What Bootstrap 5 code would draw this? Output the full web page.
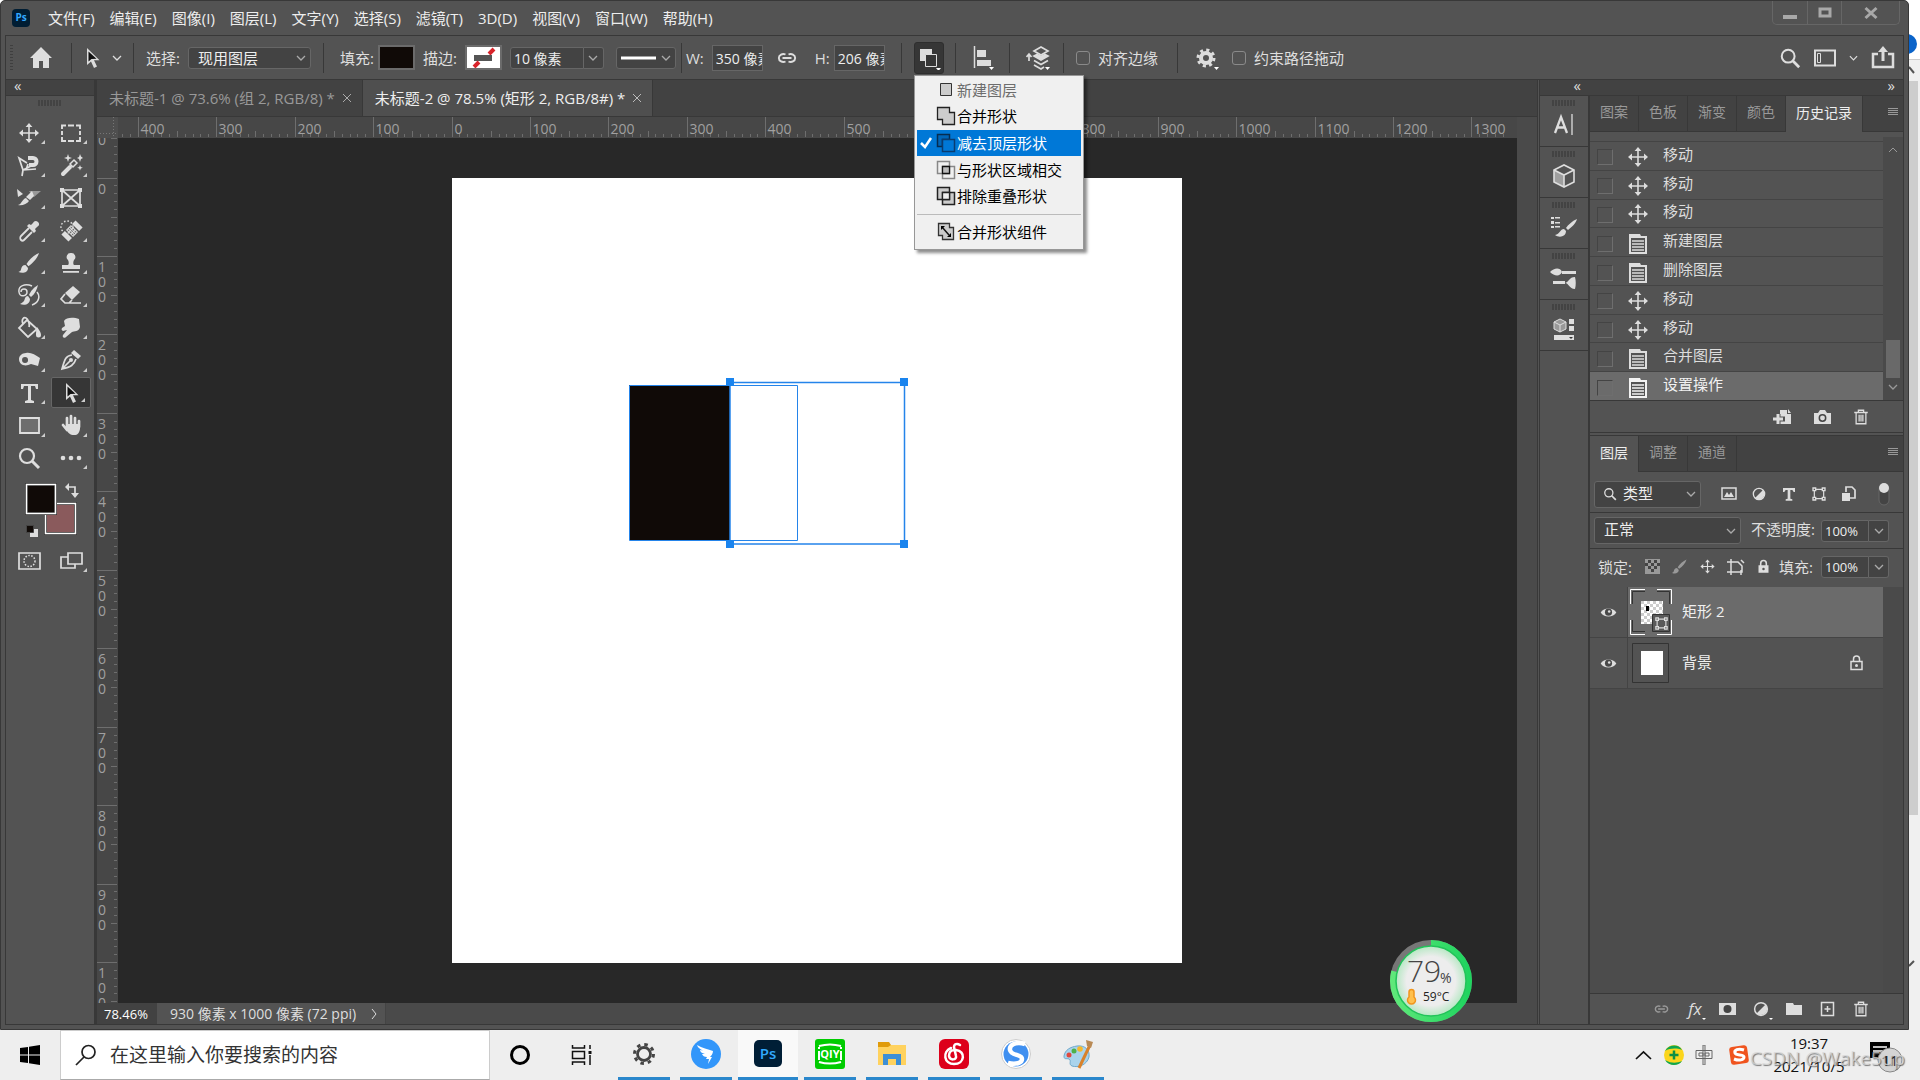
<!DOCTYPE html>
<html lang="zh-CN">
<head>
<meta charset="utf-8">
<meta name="viewport" content="width=device-width, initial-scale=1">
<title>Photoshop</title>
<link href="https://cdn.jsdelivr.net/npm/bootstrap@5.3.0/dist/css/bootstrap.min.css" rel="stylesheet">
<style>
:root{--face:#535353;--edge:#383838;--deep:#424242;--well:#434343;--ink:#dedede}
body{font-family:"Open Sans","Noto Sans CJK SC",sans-serif;font-size:15px;line-height:20px;color:var(--ink);background:#fff;height:100vh;overflow:hidden}
button,input,select{font:inherit;color:inherit}
button{background:none;border:0;padding:0}
a{color:inherit;text-decoration:none}
ul{list-style:none;margin:0;padding:0}
svg{display:block;flex:none}
svg:not([fill]){fill:currentColor}
.ic{width:24px;height:24px;fill:currentColor}
.ic-s{width:20px;height:20px}
.ln{fill:none;stroke:currentColor}
.min-0{min-width:0;min-height:0}

.app-win{background:var(--face);border:1px solid var(--edge);border-radius:5px 5px 0 0}
.menu-strip{height:34px;padding-left:11px}
.menu-links{gap:15px;padding-left:18px;color:#eee}
.ps-logo{width:18px;height:18px;border-radius:4px;background:#001d33;color:#31a8ff;font-size:10px;font-weight:700;line-height:17px;text-align:center}
.win-btns{border:1px solid #666;border-top:0;border-radius:0 0 5px 5px;height:24px;color:#a8a8a8;margin-right:8px}
.win-btns button{width:34px}
.win-btns button+button{border-left:1px solid #666}
.win-btns button:last-child{width:58px}
.frame-in{margin:0 4px 4px;border:1px solid var(--edge)}

.opt-bar{height:44px;border-bottom:1px solid var(--edge)}
.opt-home{width:65px}
.opt-seg{height:30px;padding-left:12px;border-left:1px solid var(--edge);display:flex;align-items:center;flex:none}
.w-62{width:62px}.w-190{width:190px}.w-358{width:358px}.w-220{width:220px}.w-54{width:54px}.w-114{width:114px}
.src-pick{width:123px}.stroke-in{width:74px}.dash-pick{width:60px}.dim-in{width:51px;font-size:14px}
.grip-v{width:3px;height:26px;background:repeating-linear-gradient(#3f3f3f 0 1px,transparent 1px 3px)}
.pick{appearance:none;border:1px solid #666;border-radius:3px;background:var(--well) url("data:image/svg+xml,%3Csvg xmlns='http://www.w3.org/2000/svg' viewBox='0 0 10 10'%3E%3Cpath d='M1 3l4 4 4-4' fill='none' stroke='%23aaa' stroke-width='1.3'/%3E%3C/svg%3E") no-repeat right 4px center/10px;color:#eee;padding:0 18px 0 9px;height:22px;line-height:18px}
.pick-tall{height:27px;padding-bottom:3px}
.well{border:1px solid #666;background:var(--well);color:#eee;padding:0 0 0 3px;height:26px;border-radius:0;min-width:0}
.well-s{height:22px;border-radius:3px 0 0 3px;font-size:14px}
.drop-b{width:20px;border:1px solid #666;border-left:0;border-radius:0 3px 3px 0;background:var(--well);color:#aaa;display:flex;align-items:center;justify-content:center}
.paint{width:37px;height:25px;border:2px solid #6b6b6b;background:#100a07}
.paint.none{background:#fff}
.tick{appearance:none;width:14px;height:14px;border:1px solid #8a8a8a;border-radius:3px;margin:0}
.combine-btn{width:30px;height:32px;background:#363636;border:1px solid #2e2e2e;border-radius:3px;display:flex;justify-content:center;align-items:center}
.opt-right{gap:13px;padding-right:8px}

.pop-menu{position:absolute;left:0;top:33px;z-index:20;width:170px;background:#f0f0f0;border:1px solid #979797;box-shadow:3px 3px 3px rgba(0,0,0,.45);color:#000;padding:1px 2px 3px}
.pop-list{height:133px}
.pop-menu button{display:flex;align-items:center;width:100%;flex:1;text-align:left;padding-left:19px;gap:1px;color:#000}
.pop-menu .on{background:#0078d7;color:#fff;padding-left:2px}
.pop-menu .off{color:#6d6d6d}
.pop-end{border-top:1px solid #bbb;margin-top:4px;padding-top:3px;height:32px}

.col-head{height:16px;background:var(--deep);border-bottom:1px solid var(--edge);font-size:15px;line-height:11px}
.col-head-l{width:41px}
.tool-col{width:89px;border-right:1px solid var(--edge)}
.grip-h{width:24px;height:6px;background:repeating-linear-gradient(90deg,#434343 0 2px,transparent 2px 3px)}
.tool-grid{display:grid;grid-template-columns:42px 42px;grid-template-rows:repeat(11,1fr);height:357px;margin:11px 0 0 2px}
.tool-grid button,.tool-pair button{position:relative;display:flex;align-items:center;justify-content:center}
.more::after{content:"";position:absolute;right:5px;bottom:5px;border:2px solid transparent;border-right-color:#ccc;border-bottom-color:#ccc}
.tool-grid .sel{background:#363636;border:1px solid #666;border-radius:2px;height:31px;width:40px;margin:auto}
.swatches{width:56px;height:56px;margin:9px 0 0 19px}
.tool-pair{display:grid;grid-template-columns:42px 42px;height:32px;margin:6px 0 0 2px}

.doc-col{border-left:2px solid var(--edge);border-right:1px solid var(--edge)}
.doc-tabs{height:37px;background:var(--deep);border-bottom:1px solid var(--edge)}
.doc-tab{padding:0 10px 0 12px;gap:7px;color:#999;border-right:1px solid var(--edge)}
.doc-tab.now{background:#4f4f4f;color:#eee}
.rule-h{height:21px;background:#474747}
.rule-v{width:21px;background:#474747}
.rule-c{width:21px;background:#4f4f4f}
.ruler text{font:14px "Open Sans",sans-serif;fill:#a0a0a0}
.ruler path{stroke:#6e6e6e;fill:none;shape-rendering:crispEdges}
.stage{background:#282828;overflow:hidden;padding:40px 0 0 334px}
.gut{width:20px;background:#4a4a4a}
.stat{height:21px;background:#4a4a4a;line-height:20px}
.zoom-in{width:60px;background:var(--deep);border:0;color:#fff;font-size:13px;padding:0 0 0 7px}
.doc-info{background:var(--face);width:229px;padding-left:13px;border-right:1px solid #444;font-size:14px;white-space:nowrap}

.side{width:364px;border-left:1px solid var(--edge);margin-left:1px}
.dock{width:50px;border-right:2px solid var(--edge)}
.dock button{height:51px;border-bottom:1px solid var(--edge);display:flex;flex-direction:column;align-items:center;width:100%;padding-top:4px;gap:7px}
.pan-tabs{height:36px;background:var(--deep);border-bottom:1px solid var(--edge)}
.pan-tabs button{padding:0 10px 3px;font-size:14px;color:#999;border-right:1px solid var(--edge)}
.pan-tabs .now{background:var(--face);color:#eee;margin-bottom:-1px}
.hist-box{height:264px;margin-top:5px;border-bottom:1px solid var(--edge)}
.hist li{flex:1;border-top:1px solid #444;display:flex;align-items:center;padding-left:7px;color:#ddd}
.hist li label{padding:0 0 4px 13px}
.hist li .ic{margin:2px 0 0 13px}
.hist .pad-top{flex:0 0 4px;border:0}
.hist .now{background:#6b6b6b;color:#f2f2f2}
.step{appearance:none;width:16px;height:16px;border:1px solid #444;border-right-color:#6e6e6e;border-bottom-color:#6e6e6e;margin:3px 0 0}
.sbar{width:20px;background:#4a4a4a;color:#999}
.sthumb{height:38px;width:14px;background:#696969}
.foot-ic{height:31px;padding-right:33px;gap:16px}
.foot-h{gap:21px}
.foot-l{border-top:1px solid var(--edge)}
.fx-btn{width:16px;font-size:17px;line-height:18px}
.dot-d{position:relative}
.dot-d::after{content:"";position:absolute;right:-3px;bottom:-4px;border:2px solid transparent;border-top-color:#fff}
.split{height:4px;border-top:1px solid var(--edge);border-bottom:1px solid var(--edge)}
.row-line{border-bottom:1px solid var(--edge)}
.f-row{height:41px;padding:4px 0 0 4px}
.f-pick{width:107px;padding-left:28px}
.f-glass{margin-left:9px}
.f-icons{gap:14px;margin-left:20px}
.f-switch{margin-right:13px}
.b-row{height:36px;padding-left:4px}
.b-pick{width:147px}
.op-lab{width:80px;padding:0 0 4px 10px}
.pct{width:48px;font-size:13px}
.l-row{height:38px;padding:0 0 3px 8px}
.lock-lab{width:47px}
.lock-ic{width:134px;gap:11px}
.fill-lab{width:42px}
.muted-ic{color:#999}
.lay{display:flex;height:51px;border-bottom:1px solid #444;background:var(--face)}
.lay .eye{width:38px;border-right:1px solid #444;display:flex;align-items:center;justify-content:center}
.lay .body-l{flex:1;display:flex;align-items:center;gap:10px;padding-left:2px;color:#f0f0f0}
.lay.now .body-l{background:#6b6b6b}
.lay span{padding-bottom:2px}
.lay-lock{margin-right:20px}
.empty-l{background:#4c4c4c}

.gauge{position:absolute;left:1389px;bottom:57px;z-index:15}
.desk{width:11px;background:#f0f0f0}
.desk-a{height:60px;background:#fff;border-bottom:1px solid #ccc}
.desk-t{height:734px;margin-right:2px;background:#cdcdcd}
.desk-b{height:152px;margin-bottom:0}

.task{height:50px;background:#eee;color:#222}
.task .start{width:60px;display:flex;align-items:center;justify-content:center;color:#000}
.find{width:430px;background:#fff;border:1px solid #ccc;border-bottom-color:#aaa;padding-left:14px}
.find input{border:0;outline:0;font-size:19px;background:none;color:#333;width:340px;padding:0 0 0 13px}
.find input::placeholder{color:#333;opacity:1}
.apps{gap:2px}
.apps button{width:60px;display:flex;align-items:center;justify-content:center;height:50px}
.apps .run{border-bottom:3px solid #2a87cc;width:52px;margin:0 4px}
.apps .run.now{width:60px;margin:0;background:#f9f9f9}
.tray{padding-right:15px}
.ime{margin:0 16px 0 3px}
.clock{width:92px;margin:0 14px;text-align:center;line-height:23px;color:#111}
.wm{position:absolute;right:15px;bottom:8px;font-size:19px;line-height:28px;color:rgba(215,215,215,.75);text-shadow:1px 1px 1px rgba(90,90,90,.8);pointer-events:none;z-index:5}
</style>
<script src="https://cdn.jsdelivr.net/npm/bootstrap@5.3.0/dist/js/bootstrap.bundle.min.js"></script>
</head>
<body class="d-flex flex-column">

<svg width="0" height="0" class="position-absolute" aria-hidden="true">
<pattern id="checks" width="6" height="6" patternUnits="userSpaceOnUse" x="11" y="12"><path d="M0 0h6v6H0z" fill="#fff"/><path d="M0 0h3v3H0zM3 3h3v3H3z" fill="#ccc"/></pattern>
<symbol id="move" viewBox="0 0 24 24"><path d="M12 2l3.4 4h-2.6v5.2H18V8.6l4 3.4-4 3.4v-2.6h-5.2V18h2.6L12 22l-3.4-4h2.6v-5.2H6v2.6L2 12l4-3.4v2.6h5.2V6H8.6z"/></symbol>
<symbol id="doc" viewBox="0 0 24 24"><path d="M3 3h11l1 2h6v18H3z"/><path d="M5 7h14v14H5z" fill="#535353"/><path d="M6 10h12M6 13h12M6 16h12M6 19h12" stroke="currentColor" stroke-width="1.6"/></symbol>
<symbol id="chev" viewBox="0 0 10 10"><path class="ln" d="M1 3l4 4 4-4" stroke-width="1.3"/></symbol>
<symbol id="trash" viewBox="0 0 24 24"><path class="ln" stroke-width="1.7" d="M3 6h18M8.500 6V3h7v3M5.500 6v15h13V6M9.500 9v9M12 9v9M14.500 9v9"/></symbol>
<symbol id="brush" viewBox="0 0 24 24"><path d="M22 2c-5 2-10 7-12.500 11l2 2.300C16 12 20.500 7 22 2zM8.500 14c-3 0-4 2-4.500 4.500-.3 1.500-1.500 2-2.500 2.500 3.500 1.500 9.500 1 9.500-4z"/></symbol>
<symbol id="link" viewBox="0 0 24 24"><path class="ln" stroke-width="1.900" d="M10.500 8.500A4.500 4 0 1 0 10.500 15.500M13.500 8.500A4.500 4 0 1 1 13.500 15.500M7.500 12h9"/></symbol>
<symbol id="half" viewBox="0 0 24 24"><circle class="ln" cx="12" cy="12" r="8.500" stroke-width="2"/><path d="M18 6A8.500 8.500 0 0 1 6 18z"/></symbol>
<symbol id="frame" viewBox="0 0 24 24"><path class="ln" stroke-width="1.800" d="M5 5h14v14H5z"/><path d="M2 2h6v6H2zM16 2h6v6h-6zM2 16h6v6H2zM16 16h6v6h-6z"/><path d="M4 4h2v2H4zM18 4h2v2h-2zM4 18h2v2H4zM18 18h2v2h-2z" fill="#535353"/></symbol>
<symbol id="search" viewBox="0 0 24 24"><circle class="ln" cx="10" cy="10" r="7" stroke-width="2.200"/><path class="ln" d="M15 15l7 7" stroke-width="3"/></symbol>
<symbol id="cursor" viewBox="0 0 24 24"><path d="M7 2v17l4-3.600L14 22l3-1.500-3-6.300h5.500z" fill="#ddd"/><path d="M8.500 5.500v10L11.500 13l5-.3z" fill="#111"/></symbol>
<symbol id="eye" viewBox="0 0 24 24"><path d="M1 12C5 4.500 19 4.500 23 12 19 19.500 5 19.500 1 12z"/><circle cx="12" cy="11.500" r="5" fill="#484848"/><circle cx="13" cy="10.500" r="1.800"/></symbol>
<symbol id="burger" viewBox="0 0 12 12"><path stroke="currentColor" d="M1 2.500h10M1 4.500h10M1 6.500h10M1 8.500h10"/></symbol>
<symbol id="lockf" viewBox="0 0 24 24"><path d="M4 10h16v12H4z"/><path class="ln" stroke-width="2.500" d="M7.500 11V7a4.500 4.500 0 0 1 9 0v4"/><circle cx="12" cy="16" r="2" fill="#535353"/></symbol>
</svg>

<div class="d-flex flex-fill min-0">
<main class="app-win flex-fill d-flex flex-column min-0">

  <header class="menu-strip d-flex">
    <div class="d-flex align-items-center flex-fill">
      <div class="ps-logo">Ps</div>
      <nav class="menu-links d-flex">
        <a href="#">文件(F)</a><a href="#">编辑(E)</a><a href="#">图像(I)</a><a href="#">图层(L)</a><a href="#">文字(Y)</a><a href="#">选择(S)</a><a href="#">滤镜(T)</a><a href="#">3D(D)</a><a href="#">视图(V)</a><a href="#">窗口(W)</a><a href="#">帮助(H)</a>
      </nav>
    </div>
    <div class="win-btns d-flex">
      <button aria-label="最小化"><svg class="mx-auto" width="14" height="14"><path d="M0 9h14v4H0z" fill="#a8a8a8"/></svg></button>
      <button aria-label="最大化"><svg class="mx-auto" width="14" height="14"><path d="M2 3h10v7H2z" fill="none" stroke="#a8a8a8" stroke-width="3"/></svg></button>
      <button aria-label="关闭"><svg class="mx-auto" width="14" height="14"><path d="M1.500 2l11 10M12.500 2l-11 10" stroke="#a8a8a8" stroke-width="3"/></svg></button>
    </div>
  </header>

  <div class="frame-in flex-fill d-flex flex-column min-0">
    <div class="opt-bar d-flex align-items-center">
      <div class="opt-home d-flex align-items-center ps-1"><span class="grip-v"></span>
        <button class="ms-3" aria-label="主页"><svg class="ic" viewBox="0 0 24 24"><path d="M12 1L1 12h3v10h6v-7h4v7h6V12h3z"/></svg></button></div>
      <div class="opt-seg w-62 ps-2"><button aria-label="路径选择"><svg class="ic" width="24"><use href="#cursor"/></svg></button><svg class="ms-2" width="10" height="10"><use href="#chev"/></svg></div>
      <div class="opt-seg w-190"><label for="selSrc" class="me-2">选择:</label><select id="selSrc" class="pick src-pick"><option>现用图层</option></select></div>
      <div class="opt-seg w-358 gap-1 ps-3"><span>填充:</span><button class="paint me-1" aria-label="填充颜色"></button><label for="strokeW" class="me-1">描边:</label><button class="paint none" aria-label="描边颜色"><svg width="33" height="21"><path d="M7 20l5-5M22 7l5-5" stroke="#d8232a" stroke-width="4"/><path d="M7 8h18v6H7z" fill="#555"/></svg></button>
        <span class="d-flex ms-1"><input id="strokeW" class="well well-s stroke-in" value="10 像素"><button class="drop-b" aria-label="宽度"><svg width="10" height="10"><use href="#chev"/></svg></button></span>
        <button class="pick dash-pick ms-2 p-1" aria-label="描边类型"><svg width="35" height="12"><path d="M0 6h35" stroke="#fff" stroke-width="3"/></svg></button></div>
      <div class="opt-seg w-220 ps-1"><label for="fw" class="me-2">W:</label><input id="fw" class="well dim-in" value="350 像素"><button class="ms-2 me-3 ps-1" aria-label="链接宽高"><svg class="ic" width="24"><use href="#link"/></svg></button><label for="fh" class="me-1">H:</label><input id="fh" class="well dim-in" value="206 像素"></div>
      <div class="opt-seg w-54">
        <div class="position-relative"><button class="combine-btn" aria-label="路径操作"><svg width="24" height="24"><path d="M3 3h12v12H3z" fill="#ddd"/><path d="M8.500 8.500h11v12h-11z" fill="#363636" stroke="#ddd"/><path d="M19 22h5l-2.500 3z" fill="#fff"/></svg></button>
        <div class="pop-menu">
          <div class="pop-list d-flex flex-column">
            <button class="off"><svg class="ic-s" viewBox="0 0 20 20"><path d="M4.500 3.500h11v12h-11z" fill="#ccc" stroke="#333"/></svg>新建图层</button>
            <button><svg class="ic-s" viewBox="0 0 20 20"><path d="M1.500 1.500h12v5h5v12h-12v-5h-5z" fill="#ccc" stroke="#222" stroke-width="1.300"/></svg>合并形状</button>
            <button class="on"><svg width="16" height="16"><path d="M2 8l4 4 6-9" fill="none" stroke="#fff" stroke-width="2.500"/></svg><svg class="ic-s" viewBox="0 0 20 20"><path d="M1.500 1.500h12v5h-7v7h-5z" fill="#0065b8" stroke="#062c50" stroke-width="1.500"/><path d="M6.500 6.500h12v12h-12z" fill="#0078d7" stroke="#0a3c70" stroke-width="1.500"/></svg>减去顶层形状</button>
            <button><svg class="ic-s" viewBox="0 0 20 20"><path d="M1.500 1.500h12v12h-12zM6.500 6.500h12v12h-12z" fill="none" stroke="#888" stroke-width="1.500"/><path d="M6.500 6.500h7v7h-7z" fill="#bbb" stroke="#111" stroke-width="1.300"/></svg>与形状区域相交</button>
            <button><svg class="ic-s" viewBox="0 0 20 20"><path d="M1.500 1.500h12v12h-12zM6.500 6.500h12v12h-12z" fill="#ccc" stroke="#222" stroke-width="1.500"/><path d="M6.500 6.500h7v7h-7z" fill="#eee" stroke="#222" stroke-width="1.300"/></svg>排除重叠形状</button>
          </div>
          <div class="pop-end d-flex"><button><svg class="ic-s" viewBox="0 0 20 20"><path d="M2.500 1.500h11v4h4v12h-11v-4h-4z" fill="#ccc" stroke="#333" stroke-width="1.300"/><path d="M6 5l7 8" stroke="#111" stroke-width="1.500"/><path d="M5 4h4l-4 4zM15 15h-4l4-4z"/></svg>合并形状组件</button></div>
        </div></div>
      </div>
      <div class="opt-seg w-54 ps-3"><button aria-label="对齐"><svg width="24" height="26"><path d="M2.500 1v22" stroke="#ddd" stroke-width="1.500"/><path d="M5 5h9v7H5zM5 15h14v6H5z" fill="#ddd"/><path d="M17 22h5l-2.500 3z" fill="#fff"/></svg></button></div>
      <div class="opt-seg w-54 ps-3"><button aria-label="排列"><svg width="28" height="26" fill="none" stroke="#ddd" stroke-width="1.700"><path d="M3 16V9M.5 12L3 9l2.500 3M15 2l7 4-7 4-7-4z"/><path d="M8 11l7 4 7-4-3-1.500-4 2-4-2z" fill="#ddd"/><path d="M8 15.500l7 4 7-4M8 20l7 4 3-2"/><path d="M19 22h5l-2.500 3z" fill="#fff" stroke="none"/></svg></button></div>
      <div class="opt-seg w-114 gap-2"><input class="tick" type="checkbox" id="ck1"><label for="ck1">对齐边缘</label></div>
      <div class="opt-seg flex-fill ps-3"><button aria-label="设置"><svg width="26" height="24"><circle cx="12" cy="12" r="5" fill="none" stroke="#ddd" stroke-width="4"/><circle cx="12" cy="12" r="8" fill="none" stroke="#ddd" stroke-width="3" stroke-dasharray="3.100 3.180"/><path d="M20 21h5l-2.500 3z" fill="#fff"/></svg></button><span class="d-flex align-items-center gap-2 ms-2 ps-1"><input class="tick" type="checkbox" id="ck2"><label for="ck2">约束路径拖动</label></span></div>
      <div class="opt-right d-flex align-items-center"><button aria-label="搜索"><svg width="22" height="22"><use href="#search"/></svg></button><button aria-label="工作区"><svg width="22" height="18"><path d="M1 1.500h20v15H1z" fill="none" stroke="#ddd" stroke-width="2"/><path d="M3.500 4.500h3v9h-3z" fill="none" stroke="#ddd"/></svg></button><svg width="9" height="10"><use href="#chev"/></svg><button aria-label="共享"><svg width="24" height="24"><path d="M7 8H2v13h20V8h-5" fill="none" stroke="#ddd" stroke-width="2.500"/><path d="M12 15V5" stroke="#ddd" stroke-width="3"/><path d="M7 6l5-6 5 6z" fill="#ddd"/></svg></button></div>
    </div>

    <div class="d-flex flex-fill min-0">
      <aside class="tool-col flex-shrink-0">
        <div class="col-head ps-2">«</div>
        <div class="grip-h mx-auto mt-1"></div>
        <div class="tool-grid">
          <button class="more" aria-label="移动"><svg class="ic"><use href="#move"/></svg></button>
          <button class="more" aria-label="选框"><svg class="ic" viewBox="0 0 24 24"><path class="ln" d="M3 8V4.500h4M9 4.500h6M17 4.500h4V8M21 10v4M21 16v4h-4M15 20H9M7 20H3v-4M3 14v-4" stroke-width="1.900"/></svg></button>
          <button class="more" aria-label="套索"><svg class="ic" viewBox="0 0 24 24"><path class="ln" stroke-width="1.700" d="M10 9L2 4l4 12M6 16l8-4M6 16l13-1M6 16l-1 6M11 10l-2 6"/><path class="ln" stroke-width="4" d="M11 4h5a3.500 3.500 0 0 1 0 7h-4"/></svg></button>
          <button class="more" aria-label="魔棒"><svg class="ic" viewBox="0 0 24 24"><path class="ln" stroke-width="4" stroke-linecap="round" d="M4 20l7-7"/><path class="ln" stroke-width="1.500" d="M11 10l4-4 3 3-4 4z"/><path d="M9 0l1 3 3 1-3 1-1 3-1-3-3-1 3-1zM21 0l1 2.500L24 4l-2 1-1 3-1-3-2-1 2-1zM21 11l.8 2 2 .8-2 .8-.8 2-.8-2-2-.8 2-.8z"/></svg></button>
          <button class="more" aria-label="切片"><svg class="ic" viewBox="0 0 24 24"><path d="M0 3l6 5-5 3z"/><path d="M12 5h12l-7 6z" opacity=".5"/><path d="M15 5l2 5-4 4-4-3zM9 12l3 3c-2 3-7 5-11 4 4-1 4-6 8-7z"/></svg></button>
          <button aria-label="图框"><svg class="ic" viewBox="0 0 24 24"><path class="ln" stroke-width="1.700" d="M3 4h18v16H3zM3 4l18 16M21 4L3 20"/><path d="M1 2h4v4H1zM19 2h4v4h-4zM1 18h4v4H1zM19 18h4v4h-4z"/></svg></button>
          <button class="more" aria-label="吸管"><svg class="ic" viewBox="0 0 24 24"><path d="M21 3c-2-2-4-1-5 1l-2 2-2-1-2 2 7 7 2-2-1-2 2-2c2-1 3-3 1-5z"/><path class="ln" stroke-width="1.800" d="M12 9l-8 8c-1 1-1 3 0 4s2 1 3 0l8-8"/></svg></button>
          <button class="more" aria-label="修复画笔"><svg class="ic" viewBox="0 0 24 24"><circle class="ln" cx="8" cy="8" r="6" stroke-width="1.500" stroke-dasharray="1.500 2"/><g transform="rotate(-45 13 12)"><path d="M3 7h5v10H3zM9.500 7h7v10h-7zM18 7h5v10h-5z"/><path d="M11 8v8M13 8v8M15 8v8" stroke="#666" stroke-dasharray="2 1"/></g></svg></button>
          <button class="more" aria-label="画笔"><svg class="ic"><use href="#brush"/></svg></button>
          <button class="more" aria-label="图章"><svg class="ic" viewBox="0 0 24 24"><path d="M12 2a4 4 0 0 1 3 7c-1 2-1 4 0 5h6v4H3v-4h6c1-1 1-3 0-5a4 4 0 0 1 3-7zM4 20h16v1.800H4z"/></svg></button>
          <button class="more" aria-label="历史画笔"><svg class="ic" viewBox="0 0 24 24"><path d="M21 2c-5 3-7 6-9 10l2 2c4-3 6-8 7-12zM11 13c-3 0-3 3-4 5-1 1-2 2-4 3 5 2 10 0 10-5z"/><path class="ln" stroke-width="1.500" d="M15 3C8 0 1 3 2 9s8 4 8 0-6-4-6 0M20 9c4 5 1 11-5 13"/></svg></button>
          <button class="more" aria-label="橡皮"><svg class="ic" viewBox="0 0 24 24"><path d="M14 3l7 6-8 8-7-7z"/><path class="ln" stroke-width="1.700" d="M6 11l-4 5 4 4h4l3-3M10 20h12"/></svg></button>
          <button class="more" aria-label="油漆桶"><svg class="ic" viewBox="0 0 24 24"><path class="ln" stroke-width="1.800" d="M10 4l10 9-9 8-9-9zM6 8C4 3 7 1 9 2s4 6 3 9"/><path d="M20 11c3 4 4 6 4 8a2.500 2.500 0 0 1-5 0c0-2 0-5 1-8z"/></svg></button>
          <button class="more" aria-label="涂抹"><svg class="ic" viewBox="0 0 24 24"><path d="M5 5c2-4 10-4 15-2l1 8c-1 5-6 4-8 5l-6 5c-2 2-4 0-3-2l4-5-4 1c-1-1-2-1-1-3l3-2z"/></svg></button>
          <button class="more" aria-label="减淡"><svg class="ic" viewBox="0 0 24 24"><path fill-rule="evenodd" d="M9 5c5-1 9 2 14 5l-2 8-7-2c-6 3-12 1-12-5 0-3 3-6 7-6zM8 9a3 3 0 1 0 .1 6 3 3 0 0 0-.1-6z"/></svg></button>
          <button class="more" aria-label="钢笔"><svg class="ic" viewBox="0 0 24 24"><path d="M15 2l7 6-3 3-7-6z"/><path class="ln" stroke-width="1.700" d="M13 7c-6 1-7 3-10 14 9-2 12-4 14-10M3 21l8-8"/><circle cx="12" cy="12" r="2"/></svg></button>
          <button class="more" aria-label="文字"><svg class="ic" viewBox="0 0 24 24"><path d="M4 3h17v5h-2l-1-3h-4v14l3 1v2H8v-2l3-1V5H7L6 8H4z"/></svg></button>
          <button class="more sel" aria-label="路径选择工具"><svg class="ic"><use href="#cursor"/></svg></button>
          <button class="more" aria-label="矩形"><svg class="ic" viewBox="0 0 24 24"><path d="M3 5h19v15H3z" fill="#6e6e6e" stroke="currentColor" stroke-width="1.800"/></svg></button>
          <button class="more" aria-label="抓手"><svg class="ic" viewBox="0 0 24 24"><path class="ln" stroke-width="2.700" stroke-linecap="round" d="M8 13V5M12 12V3M16 12V5M20 14V8M8 17l-4-5"/><path d="M7 11h14v5c-1 4-2 6-6 6s-6-2-8-6z"/></svg></button>
          <button aria-label="缩放"><svg class="ic"><use href="#search"/></svg></button>
          <button class="more" aria-label="更多"><svg class="ic" viewBox="0 0 24 24"><circle cx="4" cy="12" r="2.300"/><circle cx="12" cy="12" r="2.300"/><circle cx="20" cy="12" r="2.300"/></svg></button>
        </div>
        <svg class="swatches" viewBox="0 0 56 56"><path d="M20.500 20.500h30v30h-30z" fill="#8a5a5c" stroke="#333" stroke-width="3"/><path d="M20.500 20.500h30v30h-30z" fill="none" stroke="#fff" stroke-width="1.500"/><path d="M1.500 1.500h29v29h-29z" fill="#100a07" stroke="#333" stroke-width="3"/><path d="M1.500 1.500h29v29h-29z" fill="none" stroke="#fff" stroke-width="1.500"/><path d="M43 4h7v8" fill="none" stroke="#ddd" stroke-width="1.700"/><path d="M44 0v8l-4-4zM46 10h8l-4 5z" fill="#ddd"/><path d="M5 46h8v8H5z" fill="#ddd"/><path d="M1.500 42.500h7v7h-7z" fill="#100a07" stroke="#444"/></svg>
        <div class="tool-pair"><button aria-label="快速蒙版"><svg class="ic" viewBox="0 0 24 24"><path class="ln" stroke-width="1.700" d="M2 4h21v16H2z"/><circle class="ln" cx="12.500" cy="12" r="5.500" stroke-width="1.500" stroke-dasharray="1.500 1.500"/></svg></button><button class="more" aria-label="屏幕模式"><svg class="ic" viewBox="0 0 24 24"><path class="ln" stroke-width="1.700" d="M2 8h14v11H2z"/><path d="M9 4h14v11H9z" fill="#535353" stroke="currentColor" stroke-width="1.700"/></svg></button></div>
      </aside>

      <section class="doc-col flex-fill d-flex flex-column min-0">
        <div class="doc-tabs d-flex">
          <div class="doc-tab d-flex align-items-center"><span>未标题-1 @ 73.6% (组 2, RGB/8) *</span><button aria-label="关闭标签"><svg width="10" height="10"><path d="M1 1l8 8M9 1L1 9" stroke="#aaa"/></svg></button></div>
          <div class="doc-tab now d-flex align-items-center"><span>未标题-2 @ 78.5% (矩形 2, RGB/8#) *</span><button aria-label="关闭标签"><svg width="10" height="10"><path d="M1 1l8 8M9 1L1 9" stroke="#bbb"/></svg></button></div>
        </div>
        <div class="d-flex flex-fill min-0">
          <div class="flex-fill d-flex flex-column min-0">
            <div class="d-flex rule-h flex-shrink-0"><svg class="rule-c" height="21"><path d="M16.500 0v21M0 16.500h21" stroke="#777" stroke-dasharray="1 2"/></svg><svg id="rulerH" class="ruler flex-fill min-0" height="21"></svg></div>
            <div class="d-flex flex-fill min-0">
              <svg id="rulerV" class="ruler rule-v" height="100%"></svg>
              <div class="stage flex-fill">
                <svg width="730" height="785" role="img" aria-label="画布"><path d="M0 0h730v785H0z" fill="#fff"/><path d="M177 207h101v155H177z" fill="#100a07"/><g fill="none" stroke="#2484ea"><path d="M177.500 207.500h168v155h-168z"/><path d="M278 204.500h174.500v161.500H278z" stroke-width="1.500"/></g><path d="M274 200h8v8h-8zM448 200h8v8h-8zM274 362h8v8h-8zM448 362h8v8h-8z" fill="#1a84ee"/></svg>
              </div>
            </div>
          </div>
          <div class="gut"></div>
        </div>
        <div class="stat d-flex flex-shrink-0"><input class="zoom-in" aria-label="缩放比例" value="78.46%"><div class="doc-info d-flex align-items-center justify-content-between pe-2"><span>930 像素 x 1000 像素 (72 ppi)</span><svg width="6" height="12"><path class="ln" d="M1 1l4 5-4 5"/></svg></div></div>
      </section>

      <aside class="side flex-shrink-0 d-flex flex-column">
        <div class="col-head d-flex"><span class="col-head-l text-end">«</span><span class="ms-auto pe-2">»</span></div>
        <div class="d-flex flex-fill min-0">
          <div class="dock flex-shrink-0">
            <button aria-label="字符"><span class="grip-h"></span><svg class="ic" viewBox="0 0 24 24"><path class="ln" stroke-width="2.300" d="M3 20L9 4l6 16M5 14.500h8"/><path class="ln" stroke-width="1.300" d="M20 1v21"/></svg></button>
            <button aria-label="3D"><span class="grip-h"></span><svg class="ic" viewBox="0 0 24 24"><path d="M2 6l10-5 10 5v12l-10 5-10-5z" fill="none" stroke="currentColor" stroke-width="1.600"/><path d="M2 6l10 5v12L2 18z" opacity=".55"/><path class="ln" stroke-width="1.600" d="M2 6l10 5 10-5M12 11v12"/></svg></button>
            <button aria-label="画笔设置"><span class="grip-h"></span><svg width="28" height="24" fill="#ddd"><path d="M1 2h3v2H1zM1 6h3v3H1zM1 11h3v2H1zM5 2h5v1.500H5zM5 7h5v1.500H5zM5 11h5v1.500H5z"/><path d="M27 4c-5 2-9 6-11 9l2 2c4-3 8-7 9-11zM14 14c-4 0-4 5-9 6 4 3 11 2 11-4z"/></svg></button>
            <button aria-label="画笔"><span class="grip-h"></span><svg width="28" height="24" fill="#ddd"><path d="M0 6c4-4 10-5 12 0-2 5-8 4-12 0zM12 5h14v3H12zM3 15h12v3H3zM15 17c4-1 4-6 10-6 1 4 1 8 0 12-6 0-6-6-10-6z"/></svg></button>
            <button aria-label="库"><span class="grip-h"></span><svg class="ic" viewBox="0 0 24 24"><path d="M2 5l6-3 6 3v7l-6 3-6-3z" fill="#999" stroke="currentColor"/><path class="ln" d="M2 5l6 3 6-3M8 8v7"/><path d="M17 2h5v5h-5zM17 9h5v5h-5zM2 18h20v5H2z"/><path d="M17 20h4l-2 2z" fill="#333"/></svg></button>
          </div>
          <div class="flex-fill d-flex flex-column min-0">
            <div class="pan-tabs d-flex flex-shrink-0"><button>图案</button><button>色板</button><button>渐变</button><button>颜色</button><button class="now">历史记录</button><button class="ms-auto border-0 pe-1" aria-label="面板菜单"><svg width="12" height="12"><use href="#burger"/></svg></button></div>
            <div class="hist-box d-flex flex-shrink-0">
              <ul class="hist flex-fill d-flex flex-column">
                <li class="pad-top"></li>
                <li><input class="step" type="checkbox" id="h1"><svg class="ic"><use href="#move"/></svg><label for="h1">移动</label></li>
                <li><input class="step" type="checkbox" id="h2"><svg class="ic"><use href="#move"/></svg><label for="h2">移动</label></li>
                <li><input class="step" type="checkbox" id="h3"><svg class="ic"><use href="#move"/></svg><label for="h3">移动</label></li>
                <li><input class="step" type="checkbox" id="h4"><svg class="ic"><use href="#doc"/></svg><label for="h4">新建图层</label></li>
                <li><input class="step" type="checkbox" id="h5"><svg class="ic"><use href="#doc"/></svg><label for="h5">删除图层</label></li>
                <li><input class="step" type="checkbox" id="h6"><svg class="ic"><use href="#move"/></svg><label for="h6">移动</label></li>
                <li><input class="step" type="checkbox" id="h7"><svg class="ic"><use href="#move"/></svg><label for="h7">移动</label></li>
                <li><input class="step" type="checkbox" id="h8"><svg class="ic"><use href="#doc"/></svg><label for="h8">合并图层</label></li>
                <li class="now"><input class="step" type="checkbox" id="h9"><svg class="ic"><use href="#doc"/></svg><label for="h9">设置操作</label></li>
              </ul>
              <div class="sbar d-flex flex-column align-items-center"><svg class="mt-2" width="10" height="10"><path d="M1 7l4-4 4 4" fill="none" stroke="#999"/></svg><div class="sthumb mt-auto"></div><svg class="mt-1 mb-2" width="10" height="10"><use href="#chev"/></svg></div>
            </div>
            <div class="foot-ic foot-h d-flex align-items-center justify-content-end flex-shrink-0">
              <button aria-label="从状态新建文档"><svg width="20" height="18"><path d="M7 2h7v4h4v10H7z" fill="#ddd"/><path d="M15 1l3 4h-3z" fill="#ddd"/><path d="M5 6v10M0 11h12" stroke="#535353" stroke-width="5"/><path d="M5 6v10M0 11h10" stroke="#ddd" stroke-width="3"/></svg></button>
              <button aria-label="快照"><svg width="17" height="16"><path d="M0 4h4l2-3h5l2 3h4v11H0z" fill="#ddd"/><circle cx="8.500" cy="9" r="3.200" fill="none" stroke="#444" stroke-width="1.500"/></svg></button>
              <button aria-label="删除"><svg width="18" height="18"><use href="#trash"/></svg></button>
            </div>
            <div class="split flex-shrink-0"></div>

            <div class="pan-tabs d-flex flex-shrink-0"><button class="now">图层</button><button>调整</button><button>通道</button><button class="ms-auto border-0 pe-1" aria-label="面板菜单"><svg width="12" height="12"><use href="#burger"/></svg></button></div>
            <div class="f-row row-line d-flex align-items-center flex-shrink-0">
              <div class="position-relative"><select class="pick pick-tall f-pick" aria-label="图层筛选"><option>类型</option></select><svg class="f-glass position-absolute top-50 start-0 translate-middle-y" width="14" height="14"><use href="#search"/></svg></div>
              <div class="f-icons d-flex align-items-center">
                <svg width="16" height="14"><path d="M1 1h14v11H1z" fill="none" stroke="#ddd" stroke-width="1.500"/><path d="M3 10l3-5 2 3 2-3 3 5z" fill="#ddd"/></svg>
                <svg width="16" height="16"><use href="#half"/></svg>
                <svg width="16" height="16" viewBox="0 0 24 24"><path fill="#ddd" d="M3 3h18v6h-2l-2-3h-3v13l3 1v2H7v-2l3-1V6H7L5 9H3z"/></svg>
                <svg width="16" height="16"><use href="#frame"/></svg>
                <svg width="16" height="16"><path d="M5 6V1h6l3 3v8H9" fill="none" stroke="#ddd" stroke-width="1.700"/><path d="M1 7h8v8H1z" fill="#ddd"/></svg>
              </div>
              <svg width="12" height="24" class="f-switch ms-auto"><rect x="1" y="2" width="10" height="21" rx="5" fill="#444" stroke="#666"/><circle cx="6" cy="6" r="5" fill="#ddd"/></svg>
            </div>
            <div class="b-row row-line d-flex align-items-center flex-shrink-0">
              <select class="pick pick-tall b-pick" aria-label="混合模式"><option>正常</option></select>
              <label for="op" class="op-lab">不透明度:</label>
              <span class="d-flex"><input id="op" class="well well-s pct" value="100%"><button class="drop-b" aria-label="不透明度滑块"><svg width="10" height="10"><use href="#chev"/></svg></button></span>
            </div>
            <div class="l-row d-flex align-items-center flex-shrink-0">
              <span class="lock-lab">锁定:</span>
              <div class="lock-ic d-flex align-items-center">
                <svg width="15" height="15" fill="#999"><path d="M0 0h15v15H0z"/><path d="M3 1h3v3H3zM9 1h3v3H9zM6 4h3v3H6zM12 4h3v3h-3zM3 7h3v3H3zM9 7h3v3H9zM6 10h3v3H6zM0 4h3v3H0z" fill="#444"/></svg>
                <svg width="17" height="17" class="muted-ic"><use href="#brush"/></svg>
                <svg width="17" height="17"><use href="#move"/></svg>
                <svg width="18" height="16" fill="none" stroke="#ddd" stroke-width="1.500"><path d="M4 0v16M0 3h11l4 4v6H0M14 16v-5M14 1l3 3"/></svg>
                <svg width="15" height="17"><use href="#lockf"/></svg>
              </div>
              <label for="fo" class="fill-lab">填充:</label>
              <span class="d-flex"><input id="fo" class="well well-s pct" value="100%"><button class="drop-b" aria-label="填充滑块"><svg width="10" height="10"><use href="#chev"/></svg></button></span>
            </div>
            <div class="flex-fill d-flex empty-l min-0">
              <div class="flex-fill">
                <div class="lay now"><button class="eye" aria-label="可见性"><svg width="17" height="17"><use href="#eye"/></svg></button><div class="body-l"><svg width="42" height="46"><path d="M.5 15V.5H15M27 .5h14.500V15M41.500 31v14.500H27M15 45.500H.5V31" fill="none" stroke="#fff"/><path d="M2.500 15V2.500H15M27 2.500h12.500V15M15 42.500H2.500V31" fill="none" stroke="#333"/><path d="M11 12h22v23H11z" fill="url(#checks)"/><path d="M16 17h3v5h-3z" fill="#000"/><path d="M22.500 25.500h17v17h-17z" fill="#5a5a5a" stroke="#333"/><svg x="24" y="27" width="15" height="15" fill="#ddd" color="#ddd"><use href="#frame"/></svg></svg><span>矩形 2</span></div></div>
                <div class="lay"><button class="eye" aria-label="可见性"><svg width="17" height="17"><use href="#eye"/></svg></button><div class="body-l"><svg width="42" height="42"><path d="M2.500 1.500h36v39h-36z" fill="none" stroke="#333"/><path d="M11 9h22v24H11z" fill="#fff"/></svg><span>背景</span><svg class="lay-lock ms-auto" width="13" height="16"><path d="M1 6.500h11v8H1zM3.500 6V4a3 3 0 0 1 6 0v2" fill="none" stroke="#ddd" stroke-width="1.500"/><circle cx="6.500" cy="10.500" r="1.500" fill="#ddd"/></svg></div></div>
              </div>
              <div class="sbar"></div>
            </div>
            <div class="foot-ic foot-l d-flex align-items-center justify-content-end flex-shrink-0">
              <button aria-label="链接图层" class="muted-ic"><svg width="19" height="18"><use href="#link"/></svg></button>
              <button aria-label="图层样式" class="fx-btn dot-d fst-italic">fx</button>
              <button aria-label="蒙版"><svg width="17" height="14"><path d="M0 1h17v12H0z" fill="#ddd"/><circle cx="8.500" cy="7" r="4" fill="#444"/></svg></button>
              <button aria-label="调整图层" class="dot-d"><svg width="18" height="18"><use href="#half"/></svg></button>
              <button aria-label="新建组"><svg width="18" height="14"><path d="M0 1h7l1 2h8v10H0z" fill="#ddd"/></svg></button>
              <button aria-label="新建图层"><svg width="16" height="16"><path d="M1.500 1.500h12v13h-12zM4.500 8h6M7.500 5v6" fill="none" stroke="#ddd" stroke-width="1.500"/></svg></button>
              <button aria-label="删除图层"><svg width="18" height="18"><use href="#trash"/></svg></button>
            </div>
          </div>
        </div>
      </aside>
    </div>
  </div>
</main>
<div class="desk flex-shrink-0"><div class="desk-a"><svg width="11" height="60"><circle cx="-2" cy="44" r="10" fill="#0a63c9"/></svg></div><svg width="11" height="21"><path d="M0 7l5 6" stroke="#555" stroke-width="2"/></svg><div class="desk-t"></div><svg class="desk-b" width="11"><path d="M0 151l5-5" stroke="#555" stroke-width="2"/></svg></div>
</div>

<svg class="gauge" width="84" height="84" role="img" aria-label="内存 79%">
  <defs><radialGradient id="gg"><stop offset=".7" stop-color="#ededed"/><stop offset="1" stop-color="#b7e8c4"/></radialGradient><linearGradient id="gr" x2="0" y2="1"><stop offset="0" stop-color="#5fe87a"/><stop offset="1" stop-color="#1fd45f"/></linearGradient></defs>
  <circle cx="42" cy="42" r="41" fill="#777"/><circle cx="42" cy="42" r="38" fill="none" stroke="url(#gr)" stroke-width="6" stroke-dasharray="188.600 238.800" transform="rotate(-90 42 42)"/><circle cx="42" cy="42" r="35" fill="url(#gg)" stroke="#22c45a" stroke-width="1.500"/>
  <text x="18" y="43" font-size="30" font-weight="300" fill="#444" font-family="Open Sans, sans-serif">79</text><text x="51" y="44" font-size="14" fill="#444">%</text><text x="34" y="62" font-size="12" fill="#222">59°C</text>
  <path d="M20 53a2.500 2.500 0 0 1 5 0v5a4 4 0 1 1-5 0z" fill="#ffc04d" stroke="#f0951d" stroke-width="1.500"/>
</svg>

<footer class="task d-flex flex-shrink-0 position-relative">
  <button class="start" aria-label="开始"><svg width="20" height="20"><path d="M0 3l8-1v7.500H0zM9 1.800L20 0v9.500H9zM0 10.500h8V18l-8-1zM9 10.500h11V20L9 18.300z"/></svg></button>
  <div class="find d-flex align-items-center"><svg width="22" height="22" fill="none" stroke="#222" stroke-width="1.700"><circle cx="13.500" cy="8" r="6.500"/><path d="M9 13l-8 8"/></svg><input aria-label="搜索" placeholder="在这里输入你要搜索的内容"></div>
  <div class="apps d-flex">
    <button aria-label="Cortana"><svg width="22" height="22"><circle cx="11" cy="11" r="8.500" fill="none" stroke="#000" stroke-width="3"/></svg></button>
    <button aria-label="任务视图"><svg width="22" height="20" fill="none" stroke="#111" stroke-width="1.500"><path d="M1.500 0v3h12V0M1.500 20v-3h12v3M1.500 6.500h12v7h-12zM19 0v4M19 10v10"/><path d="M17.500 6h3v3h-3z" fill="#111" stroke="none"/></svg></button>
    <button class="run" aria-label="设置"><svg width="24" height="24"><circle cx="12" cy="12" r="6.500" fill="none" stroke="#444" stroke-width="2.800"/><circle cx="12" cy="12" r="9.500" fill="none" stroke="#444" stroke-width="3" stroke-dasharray="3.500 3.960"/></svg></button>
    <button class="run" aria-label="钉钉"><svg width="30" height="30"><circle cx="15" cy="15" r="15" fill="#3296fa"/><path d="M6 6c5 3 11 4 16 6 0 3-2 5-3 6h2l-4 7 1-5h-3l1-2c-3 0-4-1-5-3h3c-3-1-5-2-5-4l3 .500C9 10 7 9 6 6z" fill="#fff"/></svg></button>
    <button class="run now" aria-label="Photoshop"><svg width="28" height="28"><rect width="28" height="27" rx="5" fill="#001e36"/><text x="14" y="19" font-size="15" font-weight="600" fill="#31a8ff" text-anchor="middle">Ps</text></svg></button>
    <button class="run" aria-label="爱奇艺"><svg width="30" height="30"><rect width="30" height="30" rx="3" fill="#0c0"/><path d="M4 7c7-2 15-2 22 0M4 23c7 2 15 2 22 0M4 8v2M26 8v2M4 12v9M26 12v9" fill="none" stroke="#fff" stroke-width="2"/><text x="15" y="19" font-size="11" font-weight="700" fill="#fff" text-anchor="middle">QIY</text></svg></button>
    <button class="run" aria-label="资源管理器"><svg width="28" height="26"><path d="M0 1h11l2 3v4H0z" fill="#e09b0b"/><path d="M0 6h10l3-2h15v20H0z" fill="#ffd25e"/><path d="M5 24V13h18v11h-5v-6h-8v6z" fill="#3d8fd6"/></svg></button>
    <button class="run" aria-label="网易云音乐"><svg width="30" height="30"><rect width="30" height="30" rx="6" fill="#dd001b"/><path d="M12 9C3 13 5 25 15 25c11 0 12-13 2-14-6-.500-7 3-7 6 1 5 8 4 7 0L15 8c0-3 3-4 6-2" fill="none" stroke="#fff" stroke-width="2.500" stroke-linecap="round"/></svg></button>
    <button class="run" aria-label="搜狗浏览器"><svg width="30" height="30"><circle cx="15" cy="15" r="14.500" fill="#fff" stroke="#ccc"/><circle cx="15" cy="15" r="12.500" fill="#3f8ff0"/><path d="M24 5C15 2 8 6 9 11c1 6 12 4 12 9 0 4-6 6-14 4" fill="none" stroke="#fff" stroke-width="4.500"/></svg></button>
    <button class="run" aria-label="画图"><svg width="30" height="30"><path d="M14 7c8-1 13 4 12 11-2 8-11 11-17 9-4-2 0-5-3-7-3-1-5 1-5-3C2 11 7 8 14 7z" fill="#a9d3ec" stroke="#6fa9cc"/><circle cx="6" cy="16" r="2.500" fill="#e0483e"/><circle cx="11" cy="12" r="2.500" fill="#4fb14a"/><circle cx="17" cy="10" r="2.800" fill="#f4b92d"/><path d="M16 29L27 6" stroke="#d9822b" stroke-width="3"/><path d="M24 7l-1-6 7 2-2 6z" fill="#b98a55"/></svg></button>
  </div>
  <div class="tray d-flex align-items-center ms-auto">
    <svg width="17" height="10" class="me-2" fill="none" stroke="#111" stroke-width="1.700"><path d="M1 9l7.500-7L16 9"/></svg>
    <svg width="20" height="20" class="ms-1 me-2"><circle cx="10" cy="10" r="10" fill="#fbd51c"/><path d="M1 6C5-1 15-1 18 5 13 3 6 3 1 6zM1 15c4 7 14 6 17 1-5 2-10 3-17-1z" fill="#0fa651"/><path d="M10 5.500v9M5.500 10h9" stroke="#0c8f45" stroke-width="2.500"/></svg>
    <svg width="18" height="20" class="ime" fill="none" stroke="#666"><path d="M1 5.500h16v8H1zM4 8h4v3H4zM10 8h4v3h-4zM8 0h2v20H8z"/></svg>
    <svg width="20" height="20"><rect x="1" y="1" width="18" height="18" rx="3" fill="#f0541e" transform="rotate(-8 10 10)"/><path d="M15 5C9 3 5 5 6 8s9 1 9 4-5 4-10 2" fill="none" stroke="#fff" stroke-width="3"/></svg>
    <div class="clock">19:37<br>2021/10/5</div>
    <svg width="36" height="34" class="mt-1"><path d="M1 2h20v16h-4v4l-4-4H1z" fill="#000"/><path d="M4 7h14M4 11h10" stroke="#fff" stroke-width="1.500"/><circle cx="21" cy="20" r="12" fill="#d4d4d4" stroke="#888"/><text x="21" y="26" font-size="15" font-weight="600" text-anchor="middle">11</text></svg>
  </div>
  <div class="wm">CSDN @Wake5up</div>
</footer>

<script>
// Ruler scale: 100 document pixels take 78.46 screen pixels.
const STEP = 78.46;
function ruler(id, vertical, origin, length) {
  let d = '', labels = '';
  for (let k = -60; k < 200; k++) {
    const p = Math.floor(origin + k * STEP / 10) + 0.5;
    if (p < -40 || p > length) continue;
    const major = k % 10 === 0, half = k % 5 === 0;
    const from = major ? 0 : half ? 14 : 17;
    d += vertical ? `M${from} ${p}H20` : `M${p} ${from}V20`;
    if (major) {
      const t = String(Math.abs(k) * 10);
      if (vertical) [...t].forEach((c, i) => {
        const y = p + 15 + i * 15;
        if (y > 0 && y < 880) labels += `<text x="1" y="${y}">${c}</text>`;
      });
      else if (p >= 0) labels += `<text x="${p + 2}" y="17">${t}</text>`;
    }
  }
  document.getElementById(id).innerHTML = `<path d="${d}"/>` + labels;
}
ruler('rulerH', false, 334, 1390);
ruler('rulerV', true, 40, 880);
</script>
</body>
</html>
